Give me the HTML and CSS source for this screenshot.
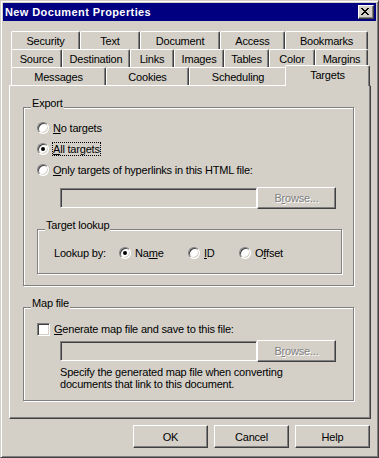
FILE: index.html
```html
<!DOCTYPE html>
<html lang="en">
<head>
    <meta charset="UTF-8">
    <title>New Document Properties</title>
    <link rel="stylesheet" href="styles.css">
</head>
<body>
<div class="window">
    <div class="titlebar">
        <span class="title">New Document Properties</span>
        <span class="close">
            <svg width="8" height="7" viewBox="0 0 8 7" shape-rendering="crispEdges">
                <path d="M0 0h2v1H0zM6 0h2v1H6zM1 1h2v1H1zM5 1h2v1H5zM2 2h4v1H2zM3 3h2v1H3zM2 4h4v1H2zM1 5h2v1H1zM5 5h2v1H5zM0 6h2v1H0zM6 6h2v1H6z" fill="#000"/>
            </svg>
        </span>
    </div>
    <div class="main">
        <div class="tabs">
            <div class="tabrow">
                <div class="tab security">Security</div>
                <div class="tab text">Text</div>
                <div class="tab document">Document</div>
                <div class="tab access">Access</div>
                <div class="tab bookmarks">Bookmarks</div>
            </div>
            <div class="tabrow">
                <div class="tab source">Source</div>
                <div class="tab destination">Destination</div>
                <div class="tab links">Links</div>
                <div class="tab images">Images</div>
                <div class="tab tables">Tables</div>
                <div class="tab color">Color</div>
                <div class="tab margins">Margins</div>
            </div>
            <div class="tabrow">
                <div class="tab messages">Messages</div>
                <div class="tab cookies">Cookies</div>
                <div class="tab scheduling">Scheduling</div>
                <div class="tab targets active">Targets</div>
            </div>
        </div>
        <div class="panel">
            <div class="group export">
                <div class="legend">Export</div>
                <div class="group-body">
                    <label class="option first"><span class="radio"></span><span><u>N</u>o targets</span></label>
                    <label class="option"><span class="radio on"></span><span class="focus"><u>A</u>ll targets</span></label>
                    <label class="option"><span class="radio"></span><span><u>O</u>nly targets of hyperlinks in this HTML file:</span></label>
                    <div class="file-row">
                        <span class="field"></span>
                        <span class="button disabled">B<u>r</u>owse...</span>
                    </div>
                    <div class="group lookup">
                        <div class="legend">Target lookup</div>
                        <div class="lookup-row">
                            <span class="lookup-label">Lookup by:</span>
                            <label class="choice name"><span class="radio on"></span><span>Na<u>m</u>e</span></label>
                            <label class="choice id"><span class="radio"></span><span><u>I</u>D</span></label>
                            <label class="choice"><span class="radio"></span><span>O<u>f</u>fset</span></label>
                        </div>
                    </div>
                </div>
            </div>
            <div class="group mapfile">
                <div class="legend">Map file</div>
                <div class="group-body">
                    <label class="option check-row"><span class="checkbox"></span><span><u>G</u>enerate map file and save to this file:</span></label>
                    <div class="file-row map">
                        <span class="field"></span>
                        <span class="button disabled">B<u>r</u>owse...</span>
                    </div>
                    <p class="note">Specify the generated map file when converting<br>documents that link to this document.</p>
                </div>
            </div>
        </div>
        <div class="actions">
            <span class="button default">OK</span>
            <span class="button">Cancel</span>
            <span class="button">Help</span>
        </div>
    </div>
</div>
</body>
</html>
```

FILE: styles.css
```css
* {
    margin: 0;
    padding: 0;
    box-sizing: border-box;
}

body {
    background: #d4d0c8;
    font-family: "Liberation Sans", Arial, sans-serif;
    font-size: 11px;
    letter-spacing: -0.2px;
    color: #000;
}

u {
    text-underline-offset: 1px;
}

.window {
    width: 379px;
    height: 458px;
    padding: 2px;
    border: 1px solid;
    border-color: #d4d0c8 #404040 #404040 #d4d0c8;
    box-shadow: inset 1px 1px #fff, inset -1px -1px #808080;
}

/* title bar */
.titlebar {
    height: 18px;
    padding: 0 2px 0 2px;
    display: flex;
    align-items: center;
    justify-content: space-between;
    background: #000080;
    color: #fff;
}

.title {
    font-weight: bold;
    letter-spacing: 0.4px;
    line-height: 18px;
}

.close {
    width: 16px;
    height: 14px;
    padding: 2px 0 0 2px;
    border: 1px solid;
    border-color: #fff #404040 #404040 #fff;
    box-shadow: inset -1px -1px #808080;
    background: #d4d0c8;
}

.close svg {
    display: block;
}

.main {
    padding: 10px 5px 0 6px;
}

/* tabs */
.tabs {
    padding-left: 2px;
}

.tabrow {
    display: flex;
    align-items: flex-start;
    height: 18px;
}

.tab {
    height: 18px;
    padding-top: 1px;
    border: 1px solid;
    border-bottom: none;
    border-color: #fff #404040 transparent #fff;
    border-radius: 2px 2px 0 0;
    box-shadow: inset -1px 0 #808080;
    text-align: center;
    line-height: 16px;
    white-space: nowrap;
}

.tab.active {
    position: relative;
    z-index: 1;
    height: 21px;
    margin: -2px -2px -1px;
    background: #d4d0c8;
}

.security { width: 69px; }
.text { width: 60px; }
.document { width: 80px; }
.access { width: 65px; }
.bookmarks { width: 83px; }
.source { width: 51px; }
.destination { width: 68px; }
.links { width: 44px; }
.images { width: 50px; }
.tables { width: 45px; }
.color { width: 46px; }
.margins { width: 53px; }
.messages { width: 95px; }
.cookies { width: 83px; }
.scheduling { width: 98px; }
.targets { width: 85px; }

/* panel */
.panel {
    height: 334px;
    padding: 21px 0 0 13px;
    border: 1px solid;
    border-color: #fff #404040 #404040 #fff;
    box-shadow: inset -1px -1px #808080;
}

.group {
    border: 1px solid #808080;
    box-shadow: inset 1px 1px #fff, 1px 1px #fff;
}

.legend {
    display: table;
    margin: -11px 0 0 7px;
    padding: 0 1px;
    background: #d4d0c8;
    line-height: 13px;
}

.group-body {
    padding-left: 13px;
}

.export {
    width: 331px;
    height: 179px;
}

.mapfile {
    width: 331px;
    height: 94px;
    margin-top: 21px;
}

.lookup {
    width: 305px;
    height: 45px;
    margin-top: 20px;
}

.option {
    display: flex;
    align-items: center;
    gap: 4px;
    height: 16px;
    margin-top: 5px;
}

.option.first {
    margin-top: 10px;
}

.check-row {
    margin-top: 11px;
}

.radio {
    flex: none;
    width: 12px;
    height: 12px;
    border: 1px solid;
    border-color: #808080 #fff #fff #808080;
    border-radius: 50%;
    background: #fff;
    box-shadow: inset 1px 1px #404040, inset -1px -1px #d4d0c8;
}

.radio.on::after {
    content: "";
    display: block;
    width: 4px;
    height: 4px;
    margin: 3px;
    border-radius: 50%;
    background: #000;
}

.checkbox {
    flex: none;
    width: 13px;
    height: 13px;
    border: 1px solid;
    border-color: #808080 #fff #fff #808080;
    background: #fff;
    box-shadow: inset 1px 1px #404040, inset -1px -1px #d4d0c8;
}

.focus {
    outline: 1px dotted #000;
}

.file-row {
    display: flex;
    align-items: center;
    height: 22px;
    margin: 9px 0 0 23px;
}

.file-row.map {
    margin-top: 3px;
}

.field {
    width: 197px;
    height: 20px;
    border: 1px solid;
    border-color: #808080 #fff #fff #808080;
    box-shadow: inset 1px 1px #404040, inset -1px -1px #d4d0c8;
}

.button {
    width: 79px;
    height: 22px;
    display: flex;
    align-items: center;
    justify-content: center;
    border: 1px solid;
    border-color: #fff #404040 #404040 #fff;
    box-shadow: inset -1px -1px #808080;
}

.disabled {
    color: #808080;
    text-shadow: 1px 1px 0 #fff;
}

.lookup-row {
    display: flex;
    align-items: center;
    height: 16px;
    margin-top: 13px;
    padding-left: 16px;
}

.lookup-label {
    width: 65px;
}

.choice {
    display: flex;
    align-items: center;
    gap: 4px;
}

.choice.name { width: 69px; }
.choice.id { width: 51px; }

.note {
    margin: 4px 0 0 23px;
    line-height: 12px;
}

/* bottom buttons */
.actions {
    display: flex;
    justify-content: flex-end;
    gap: 6px;
    margin-top: 6px;
    padding-right: 1px;
}

.actions .button {
    width: 75px;
    height: 23px;
}
```
